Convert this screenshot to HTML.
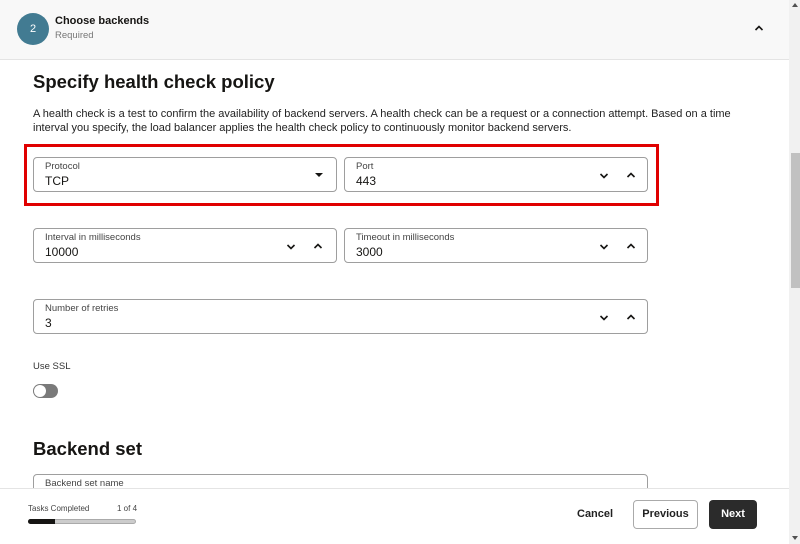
<!DOCTYPE html>
<html><head><style>
*{box-sizing:border-box;margin:0;padding:0}
body{width:800px;height:544px;overflow:hidden;font-family:"Liberation Sans",sans-serif;color:#161513;background:#fff;position:relative}
.a{position:absolute}
.hdr{left:0;top:0;width:789px;height:60px;background:#f8f8f8;border-bottom:1px solid #e4e4e4}
.fld{position:absolute;border:1px solid #9e9e9e;border-radius:4px;background:#fff;height:35px}
.fld .l{position:absolute;left:11px;top:3px;font-size:9.5px;color:#444}
.fld .v{position:absolute;left:11px;top:16px;font-size:12px;color:#161513}
.ic{position:absolute;top:11px}
</style></head><body>
<div class="a hdr"></div>
<div class="a" style="left:17px;top:13px;width:32px;height:32px;border-radius:50%;background:#427b92;color:#fff;font-size:11px;text-align:center;line-height:32px">2</div>
<div class="a" style="left:55px;top:15px;font-size:11px;font-weight:bold">Choose backends</div>
<div class="a" style="left:55px;top:30px;font-size:9.5px;color:#777">Required</div>
<svg class="a" style="left:753px;top:24px" width="12" height="8"><path d="M2.5 6L6 2.5L9.5 6" stroke="#161513" stroke-width="1.6" fill="none"/></svg>

<div class="a" style="left:33px;top:71px;font-size:18.5px;font-weight:bold">Specify health check policy</div>
<div class="a" style="left:33px;top:107px;width:720px;font-size:11px;line-height:14px;color:#222">A health check is a test to confirm the availability of backend servers. A health check can be a request or a connection attempt. Based on a time interval you specify, the load balancer applies the health check policy to continuously monitor backend servers.</div>

<div class="a" style="left:24px;top:144px;width:635px;height:62px;border:3px solid #e00000"></div>

<div class="fld" style="left:33px;top:157px;width:304px"><div class="l">Protocol</div><div class="v">TCP</div>
<svg class="ic" style="left:280px;top:14px" width="10" height="6"><path d="M1 1H9L5 5Z" fill="#161513"/></svg></div>
<div class="fld" style="left:344px;top:157px;width:304px"><div class="l">Port</div><div class="v">443</div>
<svg class="ic" style="left:253px;top:14px" width="12" height="8"><path d="M2.5 2L6 5.5L9.5 2" stroke="#161513" stroke-width="1.6" fill="none"/></svg>
<svg class="ic" style="left:280px;top:13px" width="12" height="8"><path d="M2.5 6L6 2.5L9.5 6" stroke="#161513" stroke-width="1.6" fill="none"/></svg></div>

<div class="fld" style="left:33px;top:228px;width:304px"><div class="l">Interval in milliseconds</div><div class="v">10000</div>
<svg class="ic" style="left:251px;top:14px" width="12" height="8"><path d="M2.5 2L6 5.5L9.5 2" stroke="#161513" stroke-width="1.6" fill="none"/></svg>
<svg class="ic" style="left:278px;top:13px" width="12" height="8"><path d="M2.5 6L6 2.5L9.5 6" stroke="#161513" stroke-width="1.6" fill="none"/></svg></div>
<div class="fld" style="left:344px;top:228px;width:304px"><div class="l">Timeout in milliseconds</div><div class="v">3000</div>
<svg class="ic" style="left:253px;top:14px" width="12" height="8"><path d="M2.5 2L6 5.5L9.5 2" stroke="#161513" stroke-width="1.6" fill="none"/></svg>
<svg class="ic" style="left:280px;top:13px" width="12" height="8"><path d="M2.5 6L6 2.5L9.5 6" stroke="#161513" stroke-width="1.6" fill="none"/></svg></div>

<div class="fld" style="left:33px;top:299px;width:615px"><div class="l">Number of retries</div><div class="v">3</div>
<svg class="ic" style="left:564px;top:14px" width="12" height="8"><path d="M2.5 2L6 5.5L9.5 2" stroke="#161513" stroke-width="1.6" fill="none"/></svg>
<svg class="ic" style="left:591px;top:13px" width="12" height="8"><path d="M2.5 6L6 2.5L9.5 6" stroke="#161513" stroke-width="1.6" fill="none"/></svg></div>

<div class="a" style="left:33px;top:361px;font-size:9.5px;color:#333">Use SSL</div>
<div class="a" style="left:33px;top:384px;width:25px;height:14px;border-radius:7px;background:#7a7a7a"><div style="position:absolute;left:1px;top:1px;width:12px;height:12px;border-radius:6px;background:#fff"></div></div>

<div class="a" style="left:33px;top:438px;font-size:18.5px;font-weight:bold">Backend set</div>
<div class="fld" style="left:33px;top:474px;width:615px"><div class="l" style="font-size:9.5px">Backend set name</div></div>

<div class="a" style="left:0;top:488px;width:789px;height:56px;background:#fff;border-top:1px solid #e4e4e4"></div>
<div class="a" style="left:28px;top:504px;font-size:8px;color:#444">Tasks Completed</div>
<div class="a" style="left:117px;top:504px;font-size:8px;color:#444">1 of 4</div>
<div class="a" style="left:28px;top:519px;width:108px;height:5px;border-radius:3px;background:#ccc;border:1px solid #aaa"></div>
<div class="a" style="left:28px;top:519px;width:27px;height:5px;border-radius:3px 0 0 3px;background:#161513"></div>
<div class="a" style="left:577px;top:508px;font-size:11px;font-weight:bold;color:#222">Cancel</div>
<div class="a" style="left:633px;top:500px;width:65px;height:29px;border:1px solid #aaa;border-radius:4px;font-size:11px;font-weight:bold;text-align:center;line-height:27px;color:#222">Previous</div>
<div class="a" style="left:709px;top:500px;width:48px;height:29px;background:#2b2b2b;border-radius:4px;font-size:11px;font-weight:bold;text-align:center;line-height:29px;color:#fff">Next</div>

<div class="a" style="left:789px;top:0;width:11px;height:544px;background:#f1f1f1"></div>
<div class="a" style="left:791px;top:153px;width:9px;height:135px;background:#c1c1c1"></div>
<svg class="a" style="left:791px;top:2px" width="8" height="6"><path d="M1 5H7L4 1Z" fill="#505050"/></svg>
<svg class="a" style="left:791px;top:535px" width="8" height="6"><path d="M1 1H7L4 5Z" fill="#505050"/></svg>
</body></html>
